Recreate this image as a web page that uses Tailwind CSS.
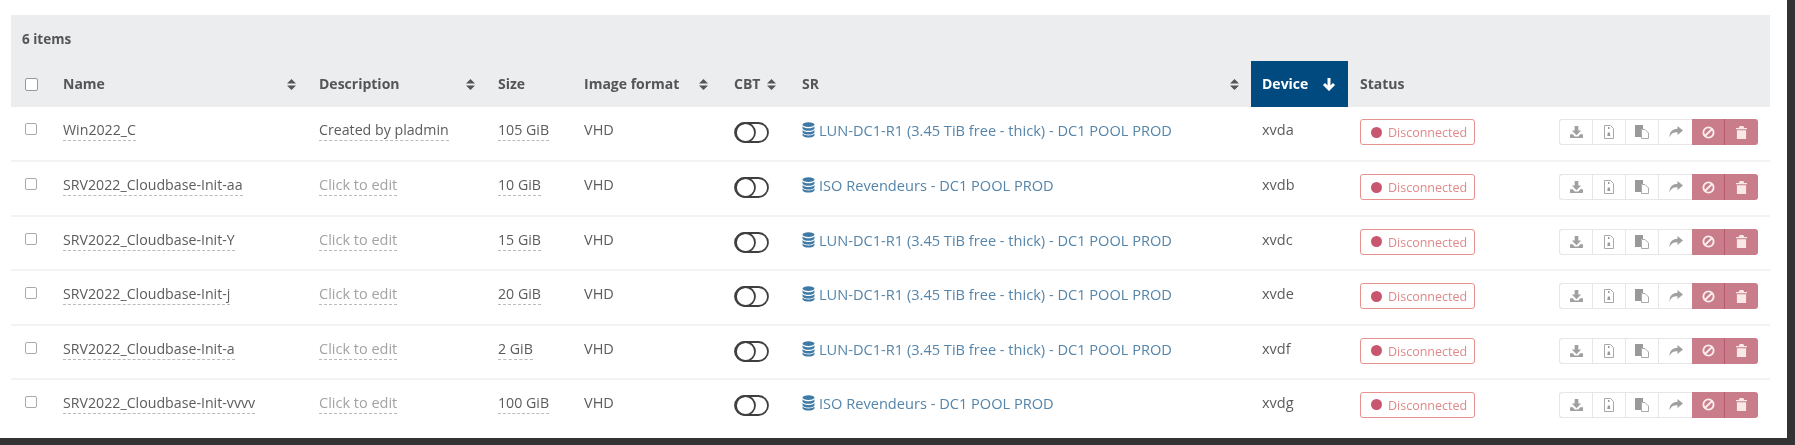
<!DOCTYPE html>
<html lang="en">
<head>
    <meta charset="UTF-8">
    <title>VM disks</title>
    <script src="https://cdn.jsdelivr.net/npm/@tailwindcss/browser@4"></script>
</head>
<body class="bg-[#333333] h-[445px] overflow-hidden font-['Open_Sans',sans-serif] text-[14.5px] leading-5 text-[#5c5c5c]">
<div class="bg-white w-[1787px] h-[438px] pt-[15px] pl-[11px] blur-[0.4px]">
    <table class="table-fixed border-collapse w-[1759px]">
        <colgroup>
            <col class="w-[41px]"><col class="w-[256px]"><col class="w-[179px]"><col class="w-[85px]"><col class="w-[150px]">
            <col class="w-[68px]"><col class="w-[461px]"><col class="w-[97px]"><col class="w-[200px]"><col class="w-[222px]">
        </colgroup>
        <thead class="bg-[#ecedef]">
        <tr class="h-[46px]">
            <td colspan="10" class="pl-[11px] pt-[2px] text-[13.5px] font-bold text-[#555]">6 items</td>
        </tr>
        <tr class="h-[46px] text-left text-[14px] font-bold text-[#555]">
            <th class="pl-[14px]"><input type="checkbox" class="block appearance-none w-[13px] h-[13px] bg-white border border-[#999] rounded-[2px]"></th>
            <th class="pl-[11px] pr-3"><div class="flex items-center justify-between">Name
                <svg width="9" height="13" viewBox="0 0 9 13" fill="#555"><path d="M0 5.500 4.500 1 9 5.500zM0 7.500h9L4.500 12z"/></svg></div></th>
            <th class="pl-[11px] pr-3"><div class="flex items-center justify-between">Description
                <svg width="9" height="13" viewBox="0 0 9 13" fill="#555"><path d="M0 5.500 4.500 1 9 5.500zM0 7.500h9L4.500 12z"/></svg></div></th>
            <th class="pl-[11px]">Size</th>
            <th class="pl-[12px] pr-[14px]"><div class="flex items-center justify-between">Image format
                <svg width="9" height="13" viewBox="0 0 9 13" fill="#555"><path d="M0 5.500 4.500 1 9 5.500zM0 7.500h9L4.500 12z"/></svg></div></th>
            <th class="pl-[12px] pr-[14px]"><div class="flex items-center justify-between">CBT
                <svg width="9" height="13" viewBox="0 0 9 13" fill="#555"><path d="M0 5.500 4.500 1 9 5.500zM0 7.500h9L4.500 12z"/></svg></div></th>
            <th class="pl-[12px] pr-3"><div class="flex items-center justify-between">SR
                <svg width="9" height="13" viewBox="0 0 9 13" fill="#555"><path d="M0 5.500 4.500 1 9 5.500zM0 7.500h9L4.500 12z"/></svg></div></th>
            <th class="bg-[#004a7f] text-white pl-[11px] pr-3"><div class="flex items-center justify-between">Device
                <svg width="14" height="14" viewBox="0 0 14 14" fill="none" stroke="#fff" stroke-width="3"><path d="M7 1v11M2 7l5 5 5-5"/></svg></div></th>
            <th class="pl-[12px]">Status</th>
            <th></th>
        </tr>
        </thead>
        <tbody id="rows"></tbody>
    </table>
</div>
<script>
    const lun = 'LUN-DC1-R1 (3.45 TiB free - thick) - DC1 POOL PROD';
    const iso = 'ISO Revendeurs - DC1 POOL PROD';
    const disks = [
        ['Win2022_C', 'Created by pladmin', '105 GiB', lun, 'xvda'],
        ['SRV2022_Cloudbase-Init-aa', '', '10 GiB', iso, 'xvdb'],
        ['SRV2022_Cloudbase-Init-Y', '', '15 GiB', lun, 'xvdc'],
        ['SRV2022_Cloudbase-Init-j', '', '20 GiB', lun, 'xvde'],
        ['SRV2022_Cloudbase-Init-a', '', '2 GiB', lun, 'xvdf'],
        ['SRV2022_Cloudbase-Init-vvvv', '', '100 GiB', iso, 'xvdg'],
    ];
    const btn = 'w-[33px] h-[26px] flex items-center justify-center';
    const grayBtn = btn + ' border-r border-[#e6e6e6]';

    document.getElementById('rows').innerHTML = disks.map(([name, desc, size, sr, device], i) => `
        <tr class="h-[54.4px] align-top ${i < 5 ? 'border-b-2 border-[#f3f3f4]' : ''}">
            <td class="pl-[14px] pt-[16px]"><input type="checkbox" class="block appearance-none w-[12px] h-[12px] bg-white border border-[#aaa] rounded-[2px]"></td>
            <td class="pl-[11px] pt-[13px] text-[14.2px]"><span class="inline-block border-b border-dashed border-[#bbb]">${name}</span></td>
            <td class="pl-[11px] pt-[13px] ${desc ? 'text-[14.2px]' : ''}"><span class="inline-block border-b border-dashed border-[#bbb] ${desc ? '' : 'text-[#a3a3a3]'}">${desc || 'Click to edit'}</span></td>
            <td class="pl-[11px] pt-[13px] text-[14.2px]"><span class="inline-block border-b border-dashed border-[#bbb]">${size}</span></td>
            <td class="pl-[12px] pt-[13px]">VHD</td>
            <td class="pl-[12px] pt-[15px]">
                <svg class="block" width="35" height="21" viewBox="0 0 35 21" fill="none" stroke="#3f3f3f" stroke-width="1.800"><rect x="1" y="1" width="33" height="19" rx="9.500"/><circle cx="11.500" cy="10.500" r="9.500"/></svg>
            </td>
            <td class="pl-[12px] pt-[13px] text-[14.6px] text-[#5585aa]"><div class="flex items-center gap-[4px]">
                <svg width="13" height="16" viewBox="0 0 13 16" fill="#3f7aa6"><ellipse cx="6.500" cy="2.600" rx="6" ry="2.400"/><path d="M.5 4.300c1 1.500 3.500 2 6 2s5-.5 6-2v2.200c-.5 1.500-3 2.300-6 2.300s-5.500-.8-6-2.300zM.5 8c1 1.500 3.500 2 6 2s5-.5 6-2v2.200c-.5 1.500-3 2.300-6 2.300s-5.500-.8-6-2.300z"/><path d="M.5 11.600c1 1.300 3.500 1.900 6 1.900s5-.6 6-1.900v1.600c-.5 1.500-3 2.300-6 2.300s-5.500-.8-6-2.300z"/></svg>
                ${sr}</div></td>
            <td class="pl-[11px] pt-[13px]">${device}</td>
            <td class="pl-[12px] pt-3">
                <div class="w-[115px] h-[26px] flex items-center gap-[6px] pl-[10px] border border-[#e8928f] rounded-[3px] text-[12.500px] text-[#e0898a]">
                    <span class="w-[11px] h-[11px] rounded-full bg-[#c9566f]"></span><span class="pt-[2px]">Disconnected</span>
                </div>
            </td>
            <td class="pr-3 pt-3">
                <div class="flex justify-end">
                    <div class="flex border border-r-0 border-[#e6e6e6] rounded-l-[3px] h-[26px] items-center">
                        <span class="${grayBtn} h-[24px]"><svg width="13" height="12" viewBox="0 0 14 13" fill="#a0a0a0"><path d="M5 0h4v5h3L7 10 2 5h3zM0 9h3l2 2.500h4L11 9h3v4H0z"/></svg></span>
                        <span class="${grayBtn} h-[24px]"><svg width="12" height="14" viewBox="0 0 12 14" fill="none" stroke="#a8a8a8"><path d="M1.500.5h6l3 3v10h-9z"/><path fill="#999" stroke="none" d="M5 2h1.500v2H5zM4.800 7.500h2l.5 3.500H4.300z"/></svg></span>
                        <span class="${grayBtn} h-[24px]"><svg width="14" height="14" viewBox="0 0 14 14" fill="#999"><path d="M0 0h8v4H6v8H0z"/><path fill="#fff" stroke="#aaa" d="M6.500 4.500h3.500l3.500 3.500v5.500h-7z"/></svg></span>
                        <span class="${btn} h-[24px]"><svg width="14" height="12" viewBox="0 0 14 12" fill="#a0a0a0"><path d="M8.500 0 14 4.500 8.500 9V6.300C4.500 6.300 2 7.500.5 11.500.3 6.500 3 3 8.500 2.800z"/></svg></span>
                    </div>
                    <div class="flex rounded-r-[3px] bg-[#c97d8b] overflow-hidden h-[26px]">
                        <span class="${btn} border-r border-[#b9596d]"><svg width="13" height="13" viewBox="0 0 14 14" fill="none" stroke="#fbeeee" stroke-width="2"><circle cx="7" cy="7" r="5.500"/><path d="M3.200 10.800 10.800 3.200"/></svg></span>
                        <span class="${btn}"><svg width="11" height="13" viewBox="0 0 12 14" fill="#f8e9e6"><path d="M4 0h4l1 2h3v1.500H0V2h3zM1 4.500h10V14H1z"/></svg></span>
                    </div>
                </div>
            </td>
        </tr>`).join('');
</script>
</body>
</html>
